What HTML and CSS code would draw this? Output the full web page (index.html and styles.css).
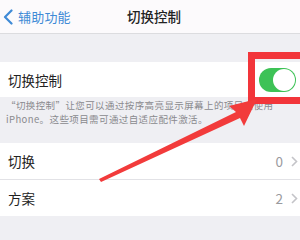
FILE: index.html
```html
<!DOCTYPE html>
<html lang="zh">
<head>
<meta charset="utf-8">
<link rel="stylesheet" href="styles.css">
</head>
<body>
<div class="screen">
  <header class="nav">
    <div class="back">
      <svg class="chev-back" width="10" height="16" viewBox="0 0 10 16"><path d="M8.5 1.5 L2 8 L8.5 14.5" fill="none" stroke="#3f8ad6" stroke-width="2.2" stroke-linecap="round" stroke-linejoin="round"/></svg>
      <span>辅助功能</span>
    </div>
    <div class="title">切换控制</div>
  </header>
  <div class="gap"></div>
  <div class="group">
    <div class="row main">
      <span class="label">切换控制</span>
      <span class="toggle"><span class="knob"></span></span>
    </div>
  </div>
  <div class="footer">
    <p>“切换控制”让您可以通过按序高亮显示屏幕上的项目来使用</p>
    <p>iPhone。这些项目需可通过自适应配件激活。</p>
  </div>
  <div class="group">
    <div class="row">
      <span class="label">切换</span>
      <span class="value">0<svg class="chev" width="7" height="11" viewBox="0 0 7 11"><path d="M1 1 L5.5 5.5 L1 10" fill="none" stroke="#c4c4c8" stroke-width="1.6"/></svg></span>
    </div>
    <div class="row">
      <span class="label">方案</span>
      <span class="value">2<svg class="chev" width="7" height="11" viewBox="0 0 7 11"><path d="M1 1 L5.5 5.5 L1 10" fill="none" stroke="#c4c4c8" stroke-width="1.6"/></svg></span>
    </div>
  </div>
  <div class="highlight"></div>
  <svg class="arrow" width="300" height="240" viewBox="0 0 300 240"><polygon points="99,179 236,112 229,106 257,99 244,126 240,118 101,182" fill="#f23b3b"/></svg>
</div>
</body>
</html>
```
FILE: styles.css
```css
html, body {
  margin: 0;
  padding: 0;
}
body {
  font-family: "Noto Sans CJK SC", "Noto Sans", sans-serif;
  background: #efeff4;
  width: 300px;
  height: 240px;
  overflow: hidden;
}
.screen {
  position: relative;
  width: 300px;
  height: 240px;
  background: #efeff3;
}
.nav {
  height: 33px;
  background: #fcfafc;
  border-bottom: 1px solid #dcdcdf;
  display: flex;
  align-items: center;
  position: relative;
}
.back {
  display: flex;
  align-items: center;
  gap: 5px;
  padding-left: 3px;
  color: #3f8ad6;
  font-size: 13px;
  letter-spacing: 0.2px;
}
.title {
  position: absolute;
  left: 127px;
  top: 0;
  line-height: 33px;
  font-size: 13.5px;
  font-weight: 500;
  color: #222;
}
.gap {
  height: 28px;
}
.group {
  background: #fff;
}
.row {
  height: 36px;
  display: flex;
  align-items: center;
  justify-content: space-between;
  padding: 0 8px 0 8px;
  font-size: 13.5px;
  color: #222;
  position: relative;
}
.row.main {
  height: 35px;
}
.row + .row {
  border-top: 1px solid #e2e2e6;
}
.toggle {
  width: 37px;
  height: 24px;
  border-radius: 12px;
  background: #3dc256;
  position: relative;
  margin-right: -4px;
}
.knob {
  position: absolute;
  right: 1px;
  top: 1px;
  width: 22px;
  height: 22px;
  border-radius: 50%;
  background: #fff;
}
.footer {
  height: 46px;
  padding: 2px 0 0 6px;
  box-sizing: border-box;
  font-size: 9.5px;
  letter-spacing: 0.4px;
  color: #8a8a8e;
  line-height: 13.5px;
  white-space: nowrap;
}
.footer p {
  margin: 0;
}
.value {
  display: flex;
  align-items: center;
  gap: 8px;
  color: #9a9a9e;
  font-size: 13.5px;
  margin-right: -6px;
}
.highlight {
  position: absolute;
  left: 248px;
  top: 52px;
  width: 60px;
  height: 52px;
  box-sizing: border-box;
  border: 7px solid #f2353a;
}
.arrow {
  position: absolute;
  left: 0;
  top: 0;
}
```
